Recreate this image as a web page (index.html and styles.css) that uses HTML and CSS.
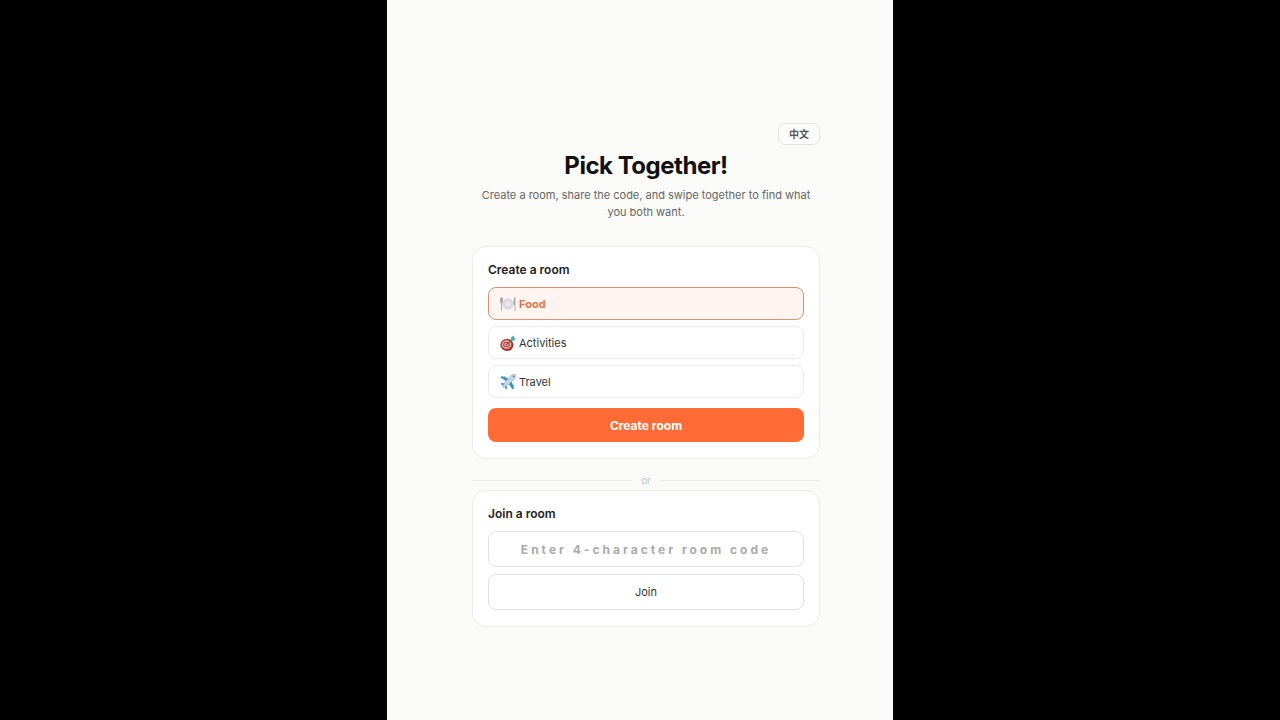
FILE: index.html
```html
<!DOCTYPE html>
<html lang="en">
<head>
    <meta charset="UTF-8">
    <meta name="viewport" content="width=device-width, initial-scale=1.0">
    <title>Pick Together!</title>
    <link rel="stylesheet" href="styles.css">
</head>
<body>
    <main class="screen">
        <div class="content">
            <button type="button" class="lang" lang="zh">中文</button>
            <h1>Pick Together!</h1>
            <p class="subtitle">Create a room, share the code, and swipe together to find what you both want.</p>

            <section class="card">
                <h2>Create a room</h2>
                <div class="options">
                    <button type="button" class="option selected" aria-pressed="true">
                        <svg class="icon" viewBox="0 0 32 32" aria-hidden="true">
                            <circle cx="16" cy="16" r="10.5" fill="#dcdbe2" stroke="#c9c8d2"/>
                            <circle cx="16" cy="16" r="6.5" fill="#e9e8ee" stroke="#c4c3ce"/>
                            <path d="M1 3v8q0 3 2 3v16M5 3v8q0 3-2 3M3 3v11" fill="none" stroke="#98959c" stroke-width="1.6"/>
                            <path d="M30 30V3q-3 4-2 14h2" fill="#b9b6be" stroke="#98959c" stroke-width="1.4"/>
                        </svg>
                        Food
                    </button>
                    <button type="button" class="option" aria-pressed="false">
                        <svg class="icon" viewBox="0 0 32 32" aria-hidden="true">
                            <ellipse cx="14" cy="20" rx="13" ry="12" fill="#7c3531"/>
                            <ellipse cx="13" cy="19" rx="12" ry="11" fill="#c5433d"/>
                            <ellipse cx="13" cy="19" rx="9" ry="8" fill="#eed9d5"/>
                            <ellipse cx="13" cy="19" rx="7" ry="6" fill="#c5433d"/>
                            <ellipse cx="13" cy="19" rx="4" ry="3.5" fill="#eed9d5"/>
                            <circle cx="13" cy="19" r="2" fill="#a82f2b"/>
                            <path d="M13 19 25 9" stroke="#4c5560" stroke-width="2"/>
                            <path d="m21 9 2-5 5-3v5l4 1-4 4-6 1z" fill="#4fa5b0"/>
                        </svg>
                        Activities
                    </button>
                    <button type="button" class="option" aria-pressed="false">
                        <svg class="icon" viewBox="0 0 32 32" aria-hidden="true">
                            <path d="M18 9 3 4 1 7l12 8zM23 14l5 15-3 2-8-12z" fill="#3e91bd"/>
                            <path d="M11 19 3 18l-2 2 7 4 4 7 2-2-1-8z" fill="#3e91bd"/>
                            <path d="M31 1c-3-1-7 0-9 2L9 17l-4 9 1 1 9-4L29 10c2-2 3-6 2-9z" fill="#c3d6e3" stroke="#8ba9bd"/>
                            <path d="m25 4 3 3 1-3-1-1z" fill="#376681"/>
                            <path d="m7 5 3-1 1 3zM26 22l2-1 1 4-2 1z" fill="#79b6d5"/>
                        </svg>
                        Travel
                    </button>
                </div>
                <button type="button" class="create">Create room</button>
            </section>

            <div class="divider"><span>or</span></div>

            <form class="card">
                <h2><label for="code">Join a room</label></h2>
                <input id="code" class="code" type="text" maxlength="4" placeholder="Enter 4-character room code" autocomplete="off">
                <button type="button" class="join">Join</button>
            </form>
        </div>
    </main>
</body>
</html>
```

FILE: styles.css
```css
* {
    box-sizing: border-box;
}

body {
    margin: 0;
    background: #000;
    color: #111;
    font-family: Inter, "Noto Sans CJK SC", sans-serif;
    font-size: 11px;
}

button,
input {
    font: inherit;
    color: inherit;
}

button {
    cursor: pointer;
}

.screen {
    display: flex;
    flex-direction: column;
    justify-content: center;
    max-width: 506px;
    min-height: 100vh;
    margin: 0 auto;
    padding: 30px 73px 0 85px;
    background: #fafaf8;
}

.content {
    display: flex;
    flex-direction: column;
}

.lang {
    align-self: flex-end;
    height: 22px;
    padding: 0 10px;
    border: 1px solid #e3e3e1;
    border-radius: 7px;
    background: #fdfdfc;
    color: #555;
    font-size: 10px;
    font-weight: 600;
    line-height: 20px;
}

h1 {
    margin: 5px 0;
    font-size: 24px;
    font-weight: 700;
    letter-spacing: -0.02em;
    line-height: 32px;
    text-align: center;
}

.subtitle {
    margin: 0 0 25px;
    color: #666;
    line-height: 17px;
    text-align: center;
}

.card {
    padding: 15px 15px 16px;
    border: 1px solid #ebebe9;
    border-radius: 14px;
    background: #fff;
}

h2 {
    margin: 0 0 9px;
    color: #222;
    font-size: 12px;
    font-weight: 600;
    line-height: 16px;
}

.options {
    display: flex;
    flex-direction: column;
    gap: 6px;
    margin-bottom: 10px;
}

.option {
    display: flex;
    align-items: center;
    gap: 3px;
    height: 33px;
    padding: 0 11px;
    border: 1px solid #ebebeb;
    border-radius: 8px;
    background: #fff;
    color: #333;
}

.selected {
    border-color: #dc906f;
    background: #fff4ef;
    color: #e57347;
    font-weight: 700;
}

.icon {
    width: 16px;
    height: 16px;
}

.create {
    display: block;
    width: 100%;
    height: 34px;
    border: 0;
    border-radius: 8px;
    background: #ff6b35;
    color: #fff;
    font-size: 12px;
    font-weight: 700;
}

.divider {
    display: flex;
    align-items: center;
    gap: 9px;
    margin: 14px 0 2px;
    color: #c4c4c4;
    font-size: 10px;
    line-height: 15px;
}

.divider::before,
.divider::after {
    content: "";
    flex: 1;
    height: 1px;
    background: #e9e9e7;
}

.code,
.join {
    display: block;
    width: 100%;
    height: 36px;
    border: 1px solid #e2e2e2;
    border-radius: 8px;
    background: #fff;
}

.code {
    margin-bottom: 7px;
    font-size: 12px;
    font-weight: 700;
    letter-spacing: 3px;
    text-align: center;
}

.code::placeholder {
    color: #aaa;
}

.join {
    color: #333;
}
```
